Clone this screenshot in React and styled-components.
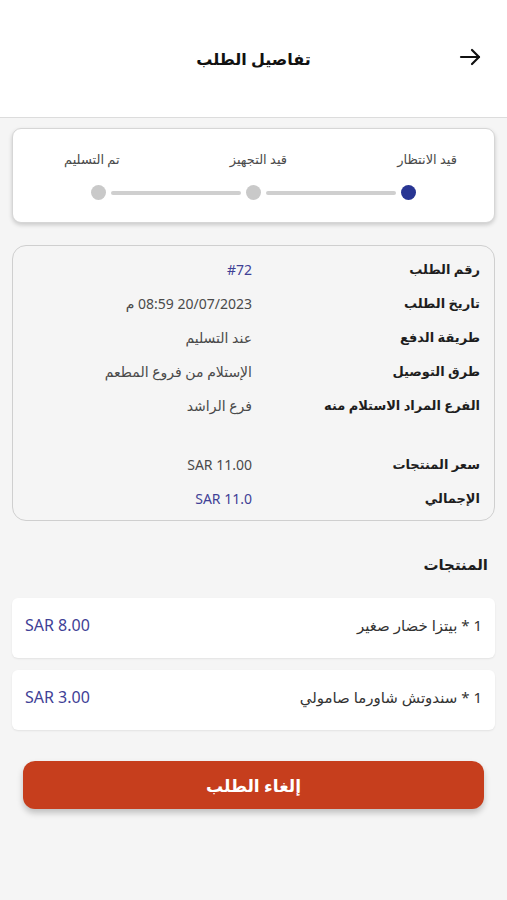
import { Fragment } from "react";
import { createGlobalStyle, styled } from "styled-components";

const GlobalStyle = createGlobalStyle`
    * { box-sizing: border-box; }
    body {
        margin: 0;
        background: #f5f5f5;
        font-family: "Noto Sans", "DejaVu Sans", sans-serif;
    }
`

const steps = [
    { label: "قيد الانتظار", done: true },
    { label: "قيد التجهيز", done: false },
    { label: "تم التسليم", done: false },
]

const info = [
    { label: "رقم الطلب", value: "#72", accent: true },
    { label: "تاريخ الطلب", value: "20/07/2023 08:59 م" },
    { label: "طريقة الدفع", value: "عند التسليم" },
    { label: "طرق التوصيل", value: "الإستلام من فروع المطعم" },
    { label: "الفرع المراد الاستلام منه", value: "فرع الراشد" },
]

const totals = [
    { label: "سعر المنتجات", value: "SAR 11.00" },
    { label: "الإجمالي", value: "SAR 11.0", accent: true },
]

const products = [
    { name: "1 * بيتزا خضار صغير", price: "SAR 8.00" },
    { name: "1 * سندوتش شاورما صامولي", price: "SAR 3.00" },
]

export default function App() {
    return (
        <Page dir="rtl">
            <GlobalStyle />
            <Header>
                <Back aria-label="رجوع">
                    <svg width="24" height="24" viewBox="0 0 24 24" fill="none" stroke="#111" strokeWidth="2.2" strokeLinecap="round" strokeLinejoin="round">
                        <path d="M3 12h18" />
                        <path d="M14 5l7 7-7 7" />
                    </svg>
                </Back>
                <Title>تفاصيل الطلب</Title>
                <Spacer />
            </Header>

            <Content>
                <StepCard>
                    <StepLabels>
                        {steps.map((s) => <StepLabel key={s.label}>{s.label}</StepLabel>)}
                    </StepLabels>
                    <StepTrack>
                        {steps.map((s, i) => (
                            <Fragment key={s.label}>
                                {i > 0 && <StepLine />}
                                <Dot $active={s.done} />
                            </Fragment>
                        ))}
                    </StepTrack>
                </StepCard>

                <InfoCard>
                    {info.map((r) => (
                        <InfoRow key={r.label}>
                            <InfoLabel>{r.label}</InfoLabel>
                            <InfoValue $accent={r.accent}>{r.value}</InfoValue>
                        </InfoRow>
                    ))}
                    <Gap />
                    {totals.map((r) => (
                        <InfoRow key={r.label}>
                            <InfoLabel>{r.label}</InfoLabel>
                            <InfoValue $accent={r.accent}>{r.value}</InfoValue>
                        </InfoRow>
                    ))}
                </InfoCard>

                <SectionTitle>المنتجات</SectionTitle>

                <ProductList>
                    {products.map((p) => (
                        <ProductCard key={p.name}>
                            <ProductName>{p.name}</ProductName>
                            <ProductPrice dir="ltr">{p.price}</ProductPrice>
                        </ProductCard>
                    ))}
                </ProductList>

                <CancelButton>إلغاء الطلب</CancelButton>
            </Content>
        </Page>
    )
}

const Page = styled.div`
    min-height: 900px;
    background: #f5f5f5;
`
const Header = styled.header`
    height: 118px;
    background: #fff;
    border-bottom: 1px solid #dcdcdc;
    display: flex;
    align-items: center;
    padding: 0 22px 0 22px;
`
const Back = styled.button`
    width: 30px;
    height: 30px;
    padding: 0;
    border: none;
    background: none;
    display: flex;
    align-items: center;
    justify-content: center;
    margin-top: -4px;
`
const Title = styled.h1`
    flex: 1;
    margin: 0;
    text-align: center;
    font-size: 16px;
    font-weight: 700;
    color: #111;
`
const Spacer = styled.div`
    width: 30px;
`
const Content = styled.main`
    padding: 10px 12px 0 12px;
`
const StepCard = styled.section`
    background: #fff;
    border: 1px solid #d6d6d6;
    border-radius: 9px;
    box-shadow: 0 2px 4px rgba(0, 0, 0, 0.18);
    height: 95px;
    padding: 20px 0 0 0;
`
const StepLabels = styled.div`
    display: flex;
    justify-content: space-between;
    padding: 0 37px 0 51px;
`
const StepLabel = styled.span`
    font-size: 13px;
    color: #4a4a4a;
    line-height: 20px;
`
const StepTrack = styled.div`
    display: flex;
    align-items: center;
    padding: 0 78px;
    margin-top: 16px;
`
const StepLine = styled.div`
    flex: 1;
    height: 4px;
    margin: 0 5px;
    background: #cfcfcf;
    border-radius: 2px;
`
const Dot = styled.div`
    width: 15px;
    height: 15px;
    border-radius: 50%;
    background: ${(p) => (p.$active ? "#283593" : "#c9c9c9")};
`
const InfoCard = styled.section`
    margin-top: 22px;
    border: 1px solid #cfcfcf;
    border-radius: 14px;
    padding: 6px 14px 5px 14px;
`
const InfoRow = styled.div`
    display: grid;
    grid-template-columns: 220px 1fr;
    column-gap: 8px;
    align-items: center;
    height: 34px;
`
const InfoLabel = styled.span`
    font-size: 13px;
    font-weight: 700;
    color: #1e1e1e;
`
const InfoValue = styled.span`
    font-size: 14px;
    color: ${(p) => (p.$accent ? "#3f4196" : "#4a4a4a")};
`
const Gap = styled.div`
    height: 25px;
`
const SectionTitle = styled.h2`
    margin: 32px 7px 0 0;
    font-size: 15px;
    font-weight: 700;
    color: #1e1e1e;
    line-height: 22px;
`
const ProductList = styled.div`
    display: flex;
    flex-direction: column;
    gap: 12px;
    margin-top: 23px;
`
const ProductCard = styled.div`
    height: 60px;
    background: #fff;
    border-radius: 6px;
    box-shadow: 0 1px 2px rgba(0, 0, 0, 0.08);
    display: flex;
    align-items: center;
    justify-content: space-between;
    padding: 0 13px;
`
const ProductName = styled.span`
    font-size: 15px;
    color: #333;
    margin-top: -6px;
`
const ProductPrice = styled.span`
    font-size: 16px;
    color: #3f4196;
    margin-top: -6px;
`
const CancelButton = styled.button`
    display: block;
    width: calc(100% - 22px);
    margin: 31px auto 0 auto;
    height: 48px;
    border: none;
    border-radius: 12px;
    background: #c63e1d;
    color: #fff;
    font-family: inherit;
    font-size: 17px;
    font-weight: 700;
    box-shadow: 0 4px 6px rgba(0, 0, 0, 0.22);
`
